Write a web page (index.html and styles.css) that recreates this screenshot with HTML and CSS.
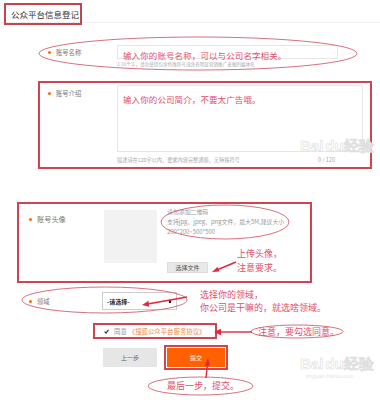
FILE: index.html
```html
<!DOCTYPE html>
<html lang="zh">
<head>
<meta charset="utf-8">
<title>公众平台信息登记</title>
<link rel="stylesheet" href="styles.css">
</head>
<body>
<div class="page">
  <header class="head"><h1 class="title">公众平台信息登记</h1></header>

  <div class="row r-name">
    <div class="label"><i class="dot"></i>账号名称</div>
    <div class="field">
      <div class="input"><span class="tip">输入你的账号名称，可以与公司名字相关。</span></div>
      <p class="hint">2-16个字，请勿使用包含特殊符号或含有明显营销推广意图的媒体名</p>
    </div>
  </div>

  <div class="row r-intro boxed">
    <div class="label"><i class="dot"></i>账号介绍</div>
    <div class="field">
      <div class="textarea"><span class="tip">输入你的公司简介，不要太广告哦。</span></div>
      <div class="hint-line"><span>描述请在120字以内，要求内容完整通顺，无特殊符号</span><span class="count">0 / 120</span></div>
    </div>
  </div>

  <div class="row r-avatar boxed">
    <div class="label big"><i class="dot"></i>账号头像</div>
    <div class="avatar"></div>
    <div class="upload">
      <p class="up-hint">请勿添加二维码<br>支持jpg、jpeg、png文件，最大5M,建议大小<br>200*200~500*500</p>
      <span class="btn-file">选择文件</span>
    </div>
  </div>

  <div class="row r-field">
    <div class="label"><i class="dot"></i>领域</div>
    <div class="select"><span>-请选择-</span><i class="caret"></i></div>
  </div>

  <div class="agree boxed">
    <span class="check"><svg width="5" height="5" viewBox="0 0 5 5"><path d="M0.6 2.6 L2 4 L4.5 0.8" fill="none" stroke="#333" stroke-width="1.2"/></svg></span>
    <span class="agree-txt">同意</span>
    <span class="agree-link">《搜狐公众平台服务协议》</span>
  </div>

  <div class="actions">
    <span class="btn btn-prev">上一步</span>
    <span class="btn btn-submit">提交</span>
  </div>

  <svg class="marks" width="380" height="400" viewBox="0 0 380 400">
    <g fill="none" stroke="#d8707f" stroke-width="1">
      <ellipse cx="198" cy="53.5" rx="159" ry="16.5"/>
      <ellipse cx="225" cy="222" rx="64" ry="17"/>
      <ellipse cx="104.5" cy="300" rx="82.5" ry="13"/>
      <ellipse cx="297" cy="331.5" rx="46" ry="6.5"/>
      <ellipse cx="200.5" cy="386" rx="52.5" ry="9"/>
    </g>
    <g stroke="#e0283a" stroke-width="1.4" fill="#e0283a">
      <line x1="236" y1="262" x2="218" y2="269.5"/>
      <polygon points="212,272 219.4,271.6 217.5,267" stroke="none"/>
      <line x1="187" y1="297" x2="149" y2="303.8"/>
      <polygon points="142,305 149.3,306.8 148.5,300.8" stroke="none"/>
      <line x1="252" y1="332" x2="221" y2="332"/>
      <polygon points="214,332 221,328.8 221,335.2" stroke="none"/>
      <line x1="206" y1="378" x2="207.4" y2="365"/>
      <polygon points="208,358 204.8,365.5 210,365.5" stroke="none"/>
    </g>
  </svg>

  <p class="note n-upload">上传头像，<br>注意要求。</p>
  <p class="note n-field">选择你的领域，<br>你公司是干嘛的，就选啥领域。</p>
  <p class="note n-agree">注意，要勾选同意。</p>
  <p class="note n-last">最后一步，提交。</p>

  <div class="wm wm-1">Bai<span>du</span>经验</div>
  <div class="wm wm-2">Bai<span>du</span>经验<small>jingyan.baidu.com</small></div>
</div>
</body>
</html>
```

FILE: styles.css
```css
html, body {
  margin: 0;
  padding: 0;
  background: #fff;
  overflow: hidden;
}

.page {
  position: relative;
  width: 380px;
  height: 400px;
  font-family: "Noto Sans CJK SC", "Noto Sans", sans-serif;
  color: #666;
}

p { margin: 0; }

.head {
  height: 22px;
  border-bottom: 1px solid #eee;
}

.title {
  box-sizing: border-box;
  margin: 0 0 0 4px;
  position: relative;
  top: 3px;
  width: 78px;
  height: 22px;
  border: 2px solid #c8434c;
  padding-left: 5px;
  font-size: 8.5px;
  font-weight: normal;
  line-height: 18px;
  color: #333;
}

.row { display: flex; }

.boxed {
  box-sizing: border-box;
  border: 2px solid #cf4450;
}

.label {
  display: flex;
  align-items: center;
  gap: 5px;
  flex: none;
  font-size: 6.3px;
  color: #777;
}

.dot {
  width: 3px;
  height: 3px;
  border-radius: 50%;
  background: #f60;
  flex: none;
}

.tip {
  color: #e0506a;
  font-size: 8.5px;
  letter-spacing: 0.1px;
}

/* row 1 */
.r-name {
  margin-top: 22px;
  padding-left: 48px;
  height: 24px;
}
.r-name .label { width: 69px; height: 14px; }
.input {
  box-sizing: border-box;
  width: 221px;
  height: 14px;
  border: 1px solid #e6e6e6;
  padding-left: 5px;
  line-height: 12px;
}
.hint {
  margin-top: 2px;
  font-size: 4.6px;
  line-height: 7px;
  color: #aaa;
  white-space: nowrap;
}

/* row 2 */
.r-intro {
  margin: 12px 0 0 38px;
  width: 334px;
  height: 88px;
  padding: 2px 0 0 8px;
}
.r-intro .label { width: 69px; height: 16px; }
.textarea {
  box-sizing: border-box;
  width: 246px;
  height: 67px;
  border: 1px solid #e6e6e6;
  padding: 4px 0 0 5px;
  line-height: 12px;
}
.hint-line {
  display: flex;
  justify-content: space-between;
  margin-top: 4px;
  font-size: 5.2px;
  line-height: 8px;
  color: #aaa;
  white-space: nowrap;
}
.count { margin-right: 28px; font-size: 5.6px; }

/* row 3 */
.r-avatar {
  margin: 33px 0 0 17px;
  width: 295px;
  height: 81px;
  padding: 6px 0 0 10px;
}
.label.big { width: 75px; height: 18px; font-size: 7.2px; }
.avatar {
  width: 53px;
  height: 53px;
  background: #f2f2f2;
  flex: none;
}
.upload {
  margin: -3px 0 0 10px;
  display: flex;
  flex-direction: column;
  align-items: flex-start;
}
.up-hint {
  font-size: 5.9px;
  line-height: 10px;
  color: #999;
  white-space: nowrap;
}
.btn-file {
  margin-top: 25px;
  box-sizing: border-box;
  width: 41px;
  height: 11px;
  background: #e8e8e8;
  border: 1px solid #ddd;
  font-size: 6px;
  line-height: 9px;
  text-align: center;
  color: #555;
}

/* row 4 */
.r-field {
  margin-top: 9px;
  padding-left: 29px;
  align-items: center;
  height: 18px;
}
.r-field .label { width: 73px; height: 18px; }
.select {
  box-sizing: border-box;
  width: 75px;
  height: 18px;
  border: 1px solid #ccc;
  display: flex;
  align-items: center;
  justify-content: space-between;
  padding: 0 5px 0 4px;
  font-size: 6px;
  color: #222;
  font-weight: bold;
}
.caret {
  width: 2px;
  height: 3px;
  background: #111;
}

/* agree */
.agree {
  margin: 13px 0 0 93px;
  width: 124px;
  height: 16px;
  display: flex;
  align-items: center;
  padding-left: 9px;
  font-size: 6.4px;
}
.check {
  display: flex;
  width: 5px;
  height: 5px;
  margin-right: 5px;
}
.agree-txt { color: #888; margin-right: 2px; }
.agree-link { color: #f08a3c; white-space: nowrap; }

/* buttons */
.actions {
  margin: 9px 0 0 103px;
  display: flex;
  gap: 10px;
}
.btn {
  height: 19px;
  font-size: 6px;
  line-height: 19px;
  text-align: center;
}
.btn-prev {
  width: 54px;
  background: #e6e6e6;
  color: #666;
}
.btn-submit {
  width: 58px;
  background: #ff6000;
  color: #fff;
  outline: 2px solid #cf4450;
  outline-offset: 1px;
}

/* annotation overlay */
.marks {
  position: absolute;
  left: 0;
  top: 0;
  pointer-events: none;
}

.note {
  position: absolute;
  color: #e0506a;
  font-size: 9px;
  white-space: nowrap;
}
.n-upload { left: 237px; top: 247px; line-height: 14px; }
.n-field { left: 200px; top: 288px; line-height: 13px; }
.n-agree { left: 258px; top: 326px; line-height: 12px; }
.n-last { left: 167px; top: 380px; line-height: 12px; }

.wm {
  position: absolute;
  font-family: "Liberation Sans", sans-serif;
  font-weight: bold;
  font-size: 15px;
  line-height: 16px;
  color: #fff;
  -webkit-text-stroke: 0.6px #e0e0e0;
  white-space: nowrap;
}
.wm span { margin-left: 2px; }
.wm small {
  display: block;
  font-size: 6px;
  line-height: 8px;
  font-weight: normal;
  -webkit-text-stroke: 0;
  color: #e6e6e6;
  padding-left: 6px;
}
.wm-1 { left: 300px; top: 138px; }
.wm-2 { left: 300px; top: 356px; }
```
